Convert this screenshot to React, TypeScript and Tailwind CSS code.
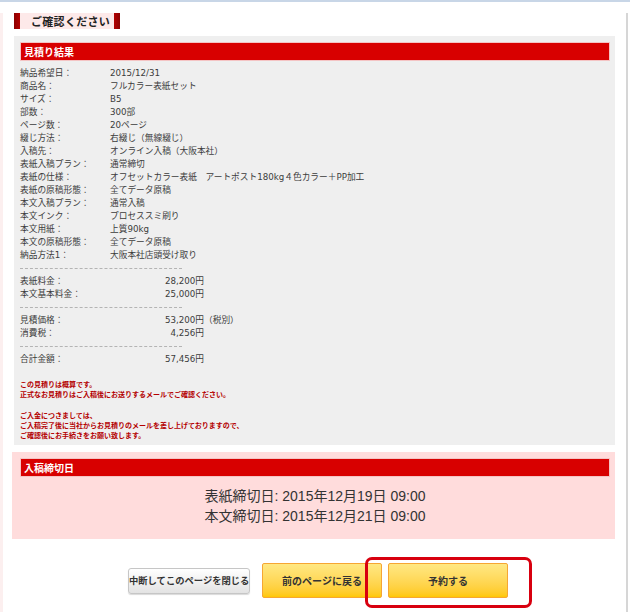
const jp = "font-['Noto_Sans_CJK_JP',sans-serif]";

const specRows: [string, string][] = [
  ["納品希望日：", "2015/12/31"],
  ["商品名：", "フルカラー表紙セット"],
  ["サイズ：", "B5"],
  ["部数：", "300部"],
  ["ページ数：", "20ページ"],
  ["綴じ方法：", "右綴じ（無線綴じ）"],
  ["入稿先：", "オンライン入稿（大阪本社）"],
  ["表紙入稿プラン：", "通常締切"],
  ["表紙の仕様：", "オフセットカラー表紙　アートポスト180kg４色カラー＋PP加工"],
  ["表紙の原稿形態：", "全てデータ原稿"],
  ["本文入稿プラン：", "通常入稿"],
  ["本文インク：", "プロセススミ刷り"],
  ["本文用紙：", "上質90kg"],
  ["本文の原稿形態：", "全てデータ原稿"],
  ["納品方法1：", "大阪本社店頭受け取り"],
];

function Dash() {
  return (
    <div className="h-[13px] flex items-center">
      <div className="w-[162px] border-t border-dashed border-[#b4b4b4]" />
    </div>
  );
}

function Price({ label, amount, suffix }: { label: string; amount: string; suffix?: string }) {
  return (
    <div className="flex h-[13px] items-center">
      <span className="w-[90px] shrink-0">{label}</span>
      <span className="w-[94px] text-right">{amount}</span>
      {suffix && <span>{suffix}</span>}
    </div>
  );
}

function RedBar({ title }: { title: string }) {
  return (
    <div className="h-[19px] flex items-center bg-[#d80000] border border-[#f4c4c4] pl-[3px] text-white text-[10px] font-bold">
      {title}
    </div>
  );
}

export default function App() {
  return (
    <div className={`relative w-[630px] h-[612px] overflow-hidden bg-white border-t-2 border-[#c8d6e7] ${jp}`}>
      <div className="h-full w-[628px] border-r-2 border-[#d6d6d6] border-l-[3px] border-l-[#fcefef] pl-[11px]">
        {/* heading */}
        <div className="mt-[11px] flex h-[16px] w-[106px]">
          <div className="w-[6px] bg-linear-to-r from-[#8c0000] to-[#b30000]" />
          <div className="flex-1 bg-[#fde9e9] pl-[11px] flex items-center text-[11px] font-bold text-[#222] tracking-[0.3px]">
            ご確認ください
          </div>
          <div className="w-[6px] bg-linear-to-r from-[#b30000] to-[#8c0000]" />
        </div>

        {/* estimate */}
        <div className="mt-[7px] w-[601px] bg-[#efefef] pt-[6px] pl-[6px] pr-[5px] pb-[5px]">
          <RedBar title="見積り結果" />
          <div className="mt-[6px] text-[8.7px] leading-[13px] text-[#3c3c3c] font-['DejaVu_Sans','Noto_Sans_CJK_JP',sans-serif]">
            {specRows.map(([k, v]) => (
              <div key={k} className="flex h-[13px] items-center">
                <span className="w-[90px] shrink-0">{k}</span>
                <span className="whitespace-nowrap">{v}</span>
              </div>
            ))}
            <Dash />
            <Price label="表紙料金：" amount="28,200円" />
            <Price label="本文基本料金：" amount="25,000円" />
            <Dash />
            <Price label="見積価格：" amount="53,200円" suffix="（税別）" />
            <Price label="消費税：" amount="4,256円" />
            <Dash />
            <Price label="合計金額：" amount="57,456円" />
          </div>
          <div className="mt-[13px] text-[7px] leading-[10.3px] font-bold text-[#b40000]">
            <p>この見積りは概算です。</p>
            <p>正式なお見積りはご入稿後にお送りするメールでご確認ください。</p>
            <p className="mt-[10px]">ご入金につきましては、</p>
            <p>ご入稿完了後に当社からお見積りのメールを差し上げておりますので、</p>
            <p>ご確認後にお手続きをお願い致します。</p>
          </div>
        </div>

        {/* deadline */}
        <div className="mt-[7px] -ml-[2px] w-[603px] bg-[#ffdcdc] pt-[6px] pl-[8px] pr-[5px] pb-[13px]">
          <RedBar title="入稿締切日" />
          <div className="mt-[9px] text-center text-[14px] leading-[20px] text-[#333] font-['Liberation_Sans','Noto_Sans_CJK_JP',sans-serif]">
            <p>表紙締切日: 2015年12月19日 09:00</p>
            <p>本文締切日: 2015年12月21日 09:00</p>
          </div>
        </div>

        {/* buttons */}
        <div className="mt-[24px] flex items-center pl-[114px]">
          <button className="h-[26px] w-[122px] rounded-[3px] border border-[#c6c6c6] bg-linear-to-b from-white to-[#e3e3e3] shadow-[0_1px_1px_rgba(0,0,0,0.15)] text-[9.3px] font-bold text-[#333] whitespace-nowrap">
            中断してこのページを閉じる
          </button>
          <button className="ml-[12px] h-[35px] w-[120px] rounded-[2px] border border-[#f6a633] bg-linear-to-b from-[#ffe882] to-[#ffc800] text-[10px] font-bold text-[#333]">
            前のページに戻る
          </button>
          <button className="ml-[6px] h-[35px] w-[120px] rounded-[2px] border border-[#f6a633] bg-linear-to-b from-[#ffe882] to-[#ffc800] text-[10px] font-bold text-[#333]">
            予約する
          </button>
        </div>
      </div>

      {/* highlight annotation */}
      <div className="absolute left-[365px] top-[555px] w-[167px] h-[51px] rounded-[7px] border-[3px] border-[#d8000f]" />
    </div>
  );
}
